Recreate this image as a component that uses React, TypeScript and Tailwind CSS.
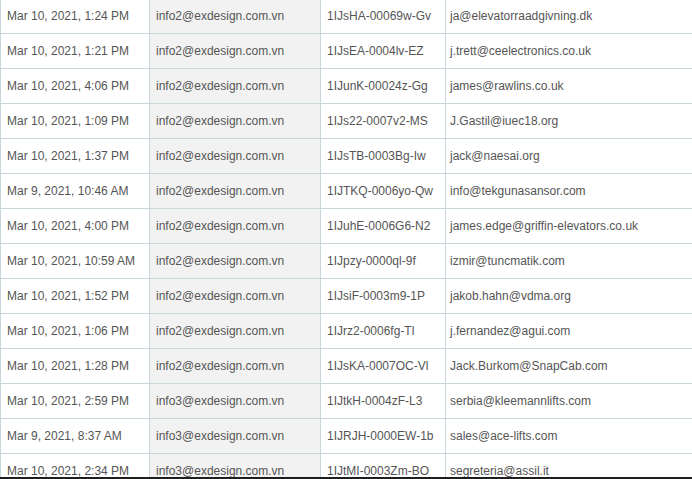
const rows = [
  ['Mar 10, 2021, 1:24 PM', 'info2@exdesign.com.vn', '1IJsHA-00069w-Gv', 'ja@elevatorraadgivning.dk'],
  ['Mar 10, 2021, 1:21 PM', 'info2@exdesign.com.vn', '1IJsEA-0004lv-EZ', 'j.trett@ceelectronics.co.uk'],
  ['Mar 10, 2021, 4:06 PM', 'info2@exdesign.com.vn', '1IJunK-00024z-Gg', 'james@rawlins.co.uk'],
  ['Mar 10, 2021, 1:09 PM', 'info2@exdesign.com.vn', '1IJs22-0007v2-MS', 'J.Gastil@iuec18.org'],
  ['Mar 10, 2021, 1:37 PM', 'info2@exdesign.com.vn', '1IJsTB-0003Bg-Iw', 'jack@naesai.org'],
  ['Mar 9, 2021, 10:46 AM', 'info2@exdesign.com.vn', '1IJTKQ-0006yo-Qw', 'info@tekgunasansor.com'],
  ['Mar 10, 2021, 4:00 PM', 'info2@exdesign.com.vn', '1IJuhE-0006G6-N2', 'james.edge@griffin-elevators.co.uk'],
  ['Mar 10, 2021, 10:59 AM', 'info2@exdesign.com.vn', '1IJpzy-0000ql-9f', 'izmir@tuncmatik.com'],
  ['Mar 10, 2021, 1:52 PM', 'info2@exdesign.com.vn', '1IJsiF-0003m9-1P', 'jakob.hahn@vdma.org'],
  ['Mar 10, 2021, 1:06 PM', 'info2@exdesign.com.vn', '1IJrz2-0006fg-Tl', 'j.fernandez@agui.com'],
  ['Mar 10, 2021, 1:28 PM', 'info2@exdesign.com.vn', '1IJsKA-0007OC-Vl', 'Jack.Burkom@SnapCab.com'],
  ['Mar 10, 2021, 2:59 PM', 'info3@exdesign.com.vn', '1IJtkH-0004zF-L3', 'serbia@kleemannlifts.com'],
  ['Mar 9, 2021, 8:37 AM', 'info3@exdesign.com.vn', '1IJRJH-0000EW-1b', 'sales@ace-lifts.com'],
  ['Mar 10, 2021, 2:34 PM', 'info3@exdesign.com.vn', '1IJtMI-0003Zm-BO', 'segreteria@assil.it'],
]

export default function App() {
  return (
    <div className="flex h-[479px] w-[692px] flex-col overflow-hidden bg-white font-['Liberation_Sans',Arial,sans-serif] text-[12px] text-[#555]">
      {/* mail log table, scrolled a few px */}
      <div className="flex-1 overflow-hidden">
        <table className="-mt-[2px] w-full table-fixed border-collapse">
          <colgroup>
            <col className="w-[149px]" />
            <col className="w-[171px]" />
            <col className="w-[125px]" />
            <col />
          </colgroup>
          <tbody>
            {rows.map((r, i) => (
              <tr key={i} className="h-[35px]">
                <td className="whitespace-nowrap border border-[#c8d6dc] px-[6px]">{r[0]}</td>
                <td className="whitespace-nowrap border border-[#c8d6dc] bg-[#f2f2f2] px-[6px]">{r[1]}</td>
                <td className="whitespace-nowrap border border-[#c8d6dc] px-[6px]">{r[2]}</td>
                <td className="whitespace-nowrap border-y border-l border-[#c8d6dc] px-[4px]">{r[3]}</td>
              </tr>
            ))}
          </tbody>
        </table>
      </div>
      <div className="h-[2px] bg-[#1e1e1e]" />
    </div>
  )
}
